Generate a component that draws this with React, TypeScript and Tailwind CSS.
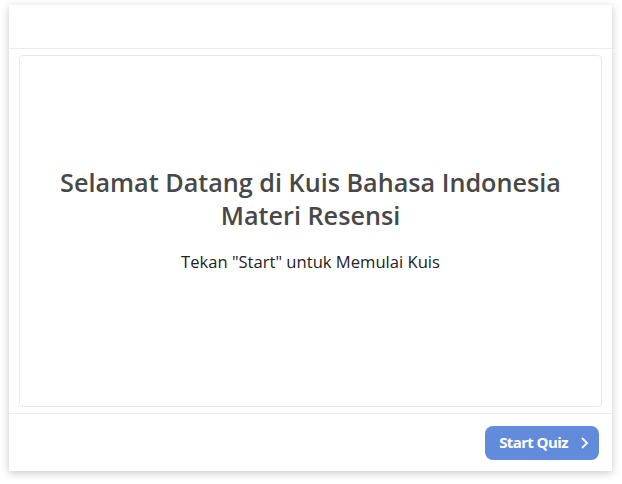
import React from "react";

export default function App() {
  return (
    <div className="w-[622px] h-[484px] bg-white pt-[5px] pl-[9px]" style={{ fontFamily: '"Open Sans", sans-serif' }}>
      <div className="w-[603px] h-[466px] bg-white flex flex-col shadow-[0_2px_8px_rgba(0,0,0,0.22)]">
        <div className="h-[44px] border-b border-[#ececec] shrink-0" />
        <div className="flex-1 px-[10px] pt-[6px] pb-[6px] flex">
          <div className="flex-1 border border-[#e8e8e8] rounded-[4px] flex flex-col items-center justify-center pb-[24px]">
            <h1 className="text-[25.2px] leading-[33px] font-semibold text-[#484848] text-center">
              Selamat Datang di Kuis Bahasa Indonesia
              <br />
              Materi Resensi
            </h1>
            <p className="mt-[19px] text-[16.6px] leading-[22px] text-[#222222]">Tekan "Start" untuk Memulai Kuis</p>
          </div>
        </div>
        <div className="h-[58px] border-t border-[#ececec] shrink-0 flex items-center justify-end pr-[13px]">
          <button className="w-[114px] h-[34px] rounded-[8px] bg-[#628bdb] text-white text-[15px] font-bold flex items-center justify-center gap-[12px] tracking-[-0.6px] pl-[4px]">
            <span>Start Quiz</span>
            <svg width="9" height="14" viewBox="0 0 9 14" fill="none" stroke="white" strokeWidth="1.8">
              <path d="M2 2l5 5-5 5" />
            </svg>
          </button>
        </div>
      </div>
    </div>
  );
}
